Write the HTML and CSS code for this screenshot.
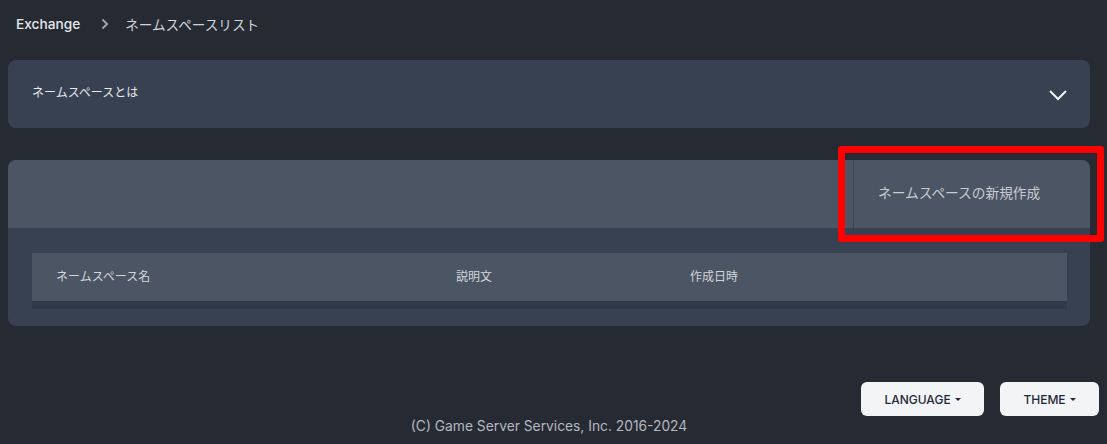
FILE: index.html
```html
<!DOCTYPE html>
<html lang="ja">
<head>
<meta charset="utf-8">
<link rel="stylesheet" href="styles.css">
</head>
<body>
<div class="page">
  <nav class="crumbs">
    <span class="crumb-root">Exchange</span>
    <svg class="crumb-sep" width="8" height="12" viewBox="0 0 8 12"><path d="M1.5 1.5 L6 6 L1.5 10.5" fill="none" stroke="#9ca3af" stroke-width="2"/></svg>
    <span class="crumb-cur">ネームスペースリスト</span>
  </nav>

  <section class="card about">
    <span class="about-title">ネームスペースとは</span>
    <svg class="chev" width="20" height="12" viewBox="0 0 20 12"><path d="M2 2 L10 10 L18 2" fill="none" stroke="#f3f4f6" stroke-width="2"/></svg>
  </section>

  <section class="card list">
    <div class="list-head">
      <div class="spacer"></div>
      <div class="create">ネームスペースの新規作成</div>
    </div>
    <div class="list-body">
      <div class="thead">
        <div class="th c1">ネームスペース名</div>
        <div class="th c2">説明文</div>
        <div class="th c3">作成日時</div>
      </div>
      <div class="tshadow"></div>
    </div>
  </section>

  <div class="toolbar">
    <button class="btn">LANGUAGE<span class="caret"></span></button>
    <button class="btn">THEME<span class="caret"></span></button>
  </div>
  <footer class="copy">(C) Game Server Services, Inc. 2016-2024</footer>
</div>
<div class="highlight"></div>
</body>
</html>
```
FILE: styles.css
```css
html, body {
  margin: 0;
  padding: 0;
  background: #262a33;
  height: 100%;
}
body {
  font-family: Inter, "Noto Sans CJK JP", sans-serif;
  color: #d1d5db;
  position: relative;
  overflow: hidden;
}
.page {
  padding: 0 17px 0 8px;
}
.crumbs {
  display: flex;
  align-items: center;
  height: 20px;
  padding: 14px 8px 0;
  font-size: 14px;
}
.crumb-root {
  color: #e5e7eb;
  font-weight: 500;
  font-size: 13.7px;
}
.crumb-sep {
  margin: 0 16px 0 21px;
}
.crumb-cur {
  color: #d1d5db;
  font-family: "Noto Sans CJK JP", sans-serif;
  font-size: 13.6px;
}
.card {
  border-radius: 8px;
  background: #374151;
}
.about {
  margin-top: 26px;
  height: 68px;
  box-sizing: border-box;
  display: flex;
  align-items: center;
  justify-content: space-between;
  padding: 0 22px 0 24px;
}
.about-title {
  font-family: "Noto Sans CJK JP", sans-serif;
  font-size: 12px;
  color: #e5e7eb;
  margin-bottom: 5px;
}
.chev {
  margin-top: 1px;
}
.list {
  margin-top: 32px;
  overflow: hidden;
}
.list-head {
  display: flex;
  height: 68px;
  background: #4b5563;
}
.spacer {
  flex: 1;
}
.create {
  width: 212px;
  border-left: 1px solid #3b4451;
  display: flex;
  align-items: center;
  padding-left: 24px;
  padding-bottom: 4px;
  box-sizing: content-box;
  height: 64px;
  font-family: "Noto Sans CJK JP", sans-serif;
  font-size: 13.7px;
  color: #c7cbd2;
}
.list-body {
  padding: 25px 23px 17px 24px;
}
.thead {
  display: flex;
  height: 44px;
  padding-bottom: 4px;
  align-items: center;
  background: #4b5563;
  font-family: "Noto Sans CJK JP", sans-serif;
  font-size: 12px;
  color: #d1d5db;
}
.th.c1 { width: 424px; padding-left: 24px; box-sizing: border-box; }
.th.c2 { width: 234px; }
.th.c3 { flex: 1; }
.tshadow {
  height: 8px;
  background: #303947;
}
.toolbar {
  display: flex;
  justify-content: flex-end;
  gap: 16px;
  margin-top: 56px;
  margin-right: -9px;
}
.btn {
  height: 34px;
  border: none;
  border-radius: 6px;
  background: #f3f4f6;
  color: #1f2937;
  font-family: Inter, sans-serif;
  font-size: 12px;
  font-weight: 500;
  padding: 0 24px;
  display: flex;
  align-items: center;
}
.btn:first-child { width: 123px; justify-content: center; }
.btn:last-child { width: 99px; justify-content: center; }
.caret {
  display: inline-block;
  width: 0;
  height: 0;
  margin-left: 4px;
  border-left: 3px solid transparent;
  border-right: 3px solid transparent;
  border-top: 3px solid #1f2937;
}
.copy {
  text-align: center;
  font-size: 13.8px;
  line-height: 20px;
  margin-top: 0;
  color: #b4b8c0;
}
.highlight {
  position: absolute;
  left: 838px;
  top: 146px;
  width: 252px;
  height: 82px;
  border: 7px solid #ff0000;
  border-radius: 3px;
}
```
